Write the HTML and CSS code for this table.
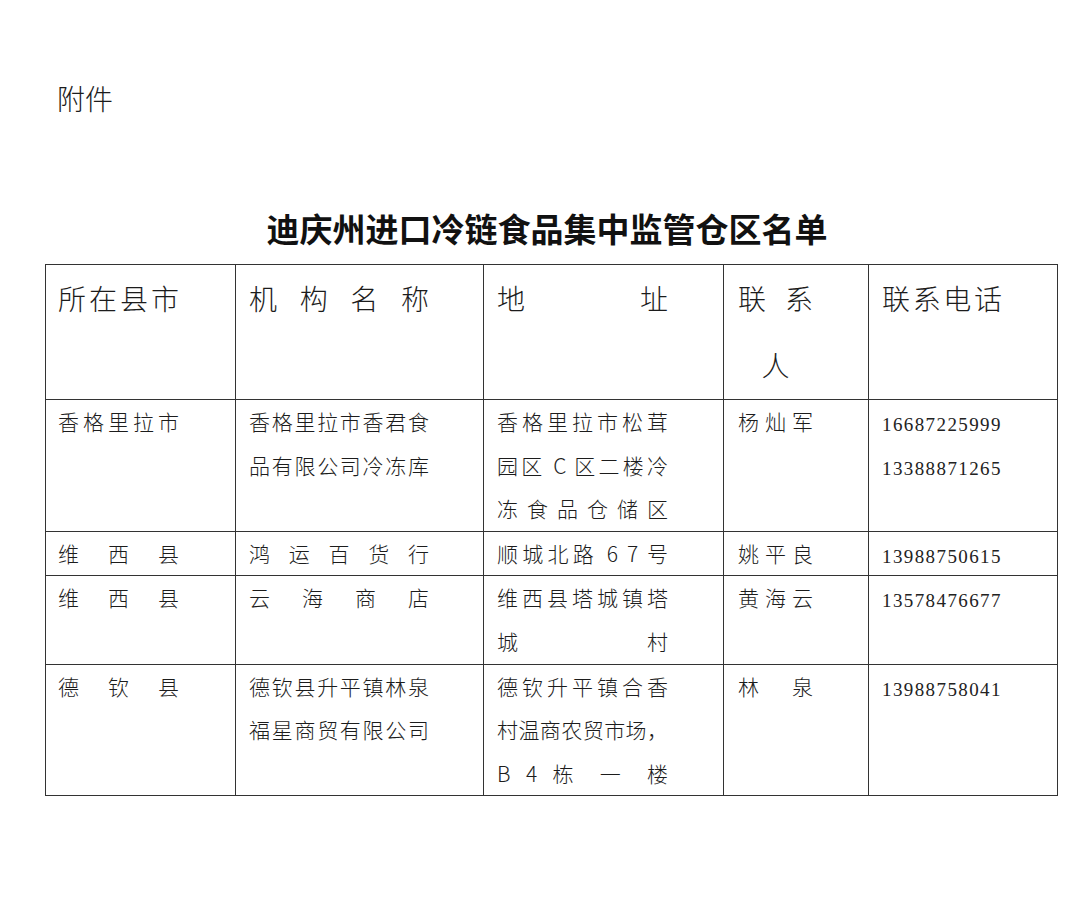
FILE: index.html
```html
<!DOCTYPE html>
<html lang="zh-CN">
<head>
<meta charset="utf-8">
<title>附件</title>
<link rel="stylesheet" href="styles.css">
</head>
<body>
<div class="page">
  <div class="attach">附件</div>
  <h1 class="title">迪庆州进口冷链食品集中监管仓区名单</h1>
  <table class="list">
    <colgroup>
      <col class="c1"><col class="c2"><col class="c3"><col class="c4"><col class="c5">
    </colgroup>
    <thead>
      <tr class="head">
        <th class="k1"><span class="ln">所在县市</span></th>
        <th class="k2"><span class="ln">机构名称</span></th>
        <th class="k3"><span class="ln">地 址</span></th>
        <th class="k4"><span class="ln">联系</span><span class="ln mid">人</span></th>
        <th class="k5"><span class="ln">联系电话</span></th>
      </tr>
    </thead>
    <tbody>
      <tr>
        <td class="k1"><span class="ln">香格里拉市</span></td>
        <td class="k2"><span class="ln">香格里拉市香君食</span><span class="ln">品有限公司冷冻库</span></td>
        <td class="k3"><span class="ln">香格里拉市松茸</span><span class="ln">园区 C 区二楼冷</span><span class="ln">冻食品仓储区</span></td>
        <td class="k4"><span class="ln">杨灿军</span></td>
        <td class="k5"><span class="num">16687225999</span><span class="num">13388871265</span></td>
      </tr>
      <tr>
        <td class="k1"><span class="ln">维西县</span></td>
        <td class="k2"><span class="ln">鸿运百货行</span></td>
        <td class="k3"><span class="ln">顺城北路 6 7 号</span></td>
        <td class="k4"><span class="ln">姚平良</span></td>
        <td class="k5"><span class="num">13988750615</span></td>
      </tr>
      <tr>
        <td class="k1"><span class="ln">维西县</span></td>
        <td class="k2"><span class="ln">云海商店</span></td>
        <td class="k3"><span class="ln">维西县塔城镇塔</span><span class="ln">城 村</span></td>
        <td class="k4"><span class="ln">黄海云</span></td>
        <td class="k5"><span class="num">13578476677</span></td>
      </tr>
      <tr>
        <td class="k1"><span class="ln">德钦县</span></td>
        <td class="k2"><span class="ln">德钦县升平镇林泉</span><span class="ln">福星商贸有限公司</span></td>
        <td class="k3"><span class="ln">德钦升平镇合香</span><span class="ln">村温商农贸市场，</span><span class="ln">B 4 栋 一 楼</span></td>
        <td class="k4"><span class="ln">林 泉</span></td>
        <td class="k5"><span class="num">13988758041</span></td>
      </tr>
    </tbody>
  </table>
</div>
</body>
</html>
```

FILE: styles.css
```css
html, body {
  margin: 0;
  padding: 0;
  background: #ffffff;
}

body {
  font-family: "Noto Sans CJK SC", "Noto Sans CJK TC", sans-serif;
  color: #1c1c1c;
}

.page {
  padding: 84px 0 0 45px;
}

.attach {
  margin-left: 12px;
  font-size: 28px;
  line-height: 28px;
  font-weight: 300;
}

.title {
  width: 1012px;
  margin: 99px 0 19px 0;
  padding-right: 8px;
  box-sizing: border-box;
  text-align: center;
  font-size: 33px;
  line-height: 34px;
  font-weight: 700;
  color: #111;
}

.list {
  width: 1012px;
  border-collapse: collapse;
  table-layout: fixed;
  border: 1px solid #333;
}

.c1 { width: 190px; }
.c2 { width: 248px; }
.c3 { width: 240px; }
.c4 { width: 145px; }
.c5 { width: 189px; }

.list th,
.list td {
  border: 1px solid #333;
  vertical-align: top;
  padding: 0;
  text-align: left;
  font-weight: 300;
}

.head th {
  font-size: 28px;
  line-height: 67px;
}

.list td {
  font-size: 21px;
  line-height: 43.6px;
}

.ln {
  display: block;
  text-align: justify;
  text-align-last: justify;
  white-space: nowrap;
}

.ln.mid {
  text-align: center;
  text-align-last: center;
}

.k1 .ln { margin-left: 12px; width: 121px; }
.k2 .ln { margin-left: 13px; width: 180px; }
.k3 .ln { margin-left: 13px; width: 171px; }
.k4 .ln { margin-left: 14px; width: 75px; }
.k5 .ln { margin-left: 13px; width: 120px; }

.num {
  display: block;
  margin-left: 13px;
  padding-top: 6px;
  line-height: 37.6px;
  font-family: "Liberation Serif", serif;
  font-size: 19px;
  letter-spacing: 1.4px;
  color: #222;
}
```
